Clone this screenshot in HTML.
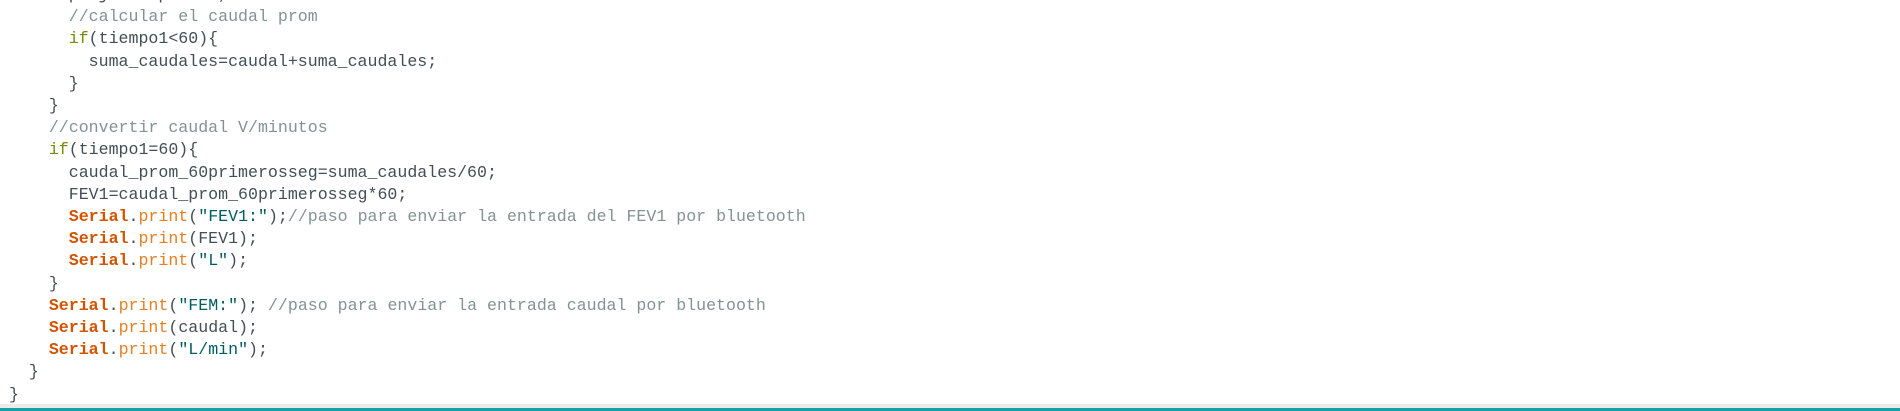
<!DOCTYPE html>
<html><head><meta charset="utf-8"><style>
html,body{margin:0;padding:0;width:1900px;height:411px;overflow:hidden;background:#fff;}
#code{position:absolute;left:9px;top:-16px;font-family:"Liberation Mono",monospace;font-size:16.6px;line-height:22.2px;color:#434f54;white-space:pre;}
.c{color:#849294}.k{color:#728e00}.s{color:#d35400;font-weight:bold}.p{color:#e67e22}.q{color:#005c5f}
#g{position:absolute;left:0;top:404px;width:1900px;height:4px;background:#ebebeb}
#t{position:absolute;left:0;top:408px;width:1900px;height:3px;background:#17a1a5}
</style></head><body>
<div id="code">      p  j     p     ,
      <span class="c">//calcular el caudal prom</span>
      <span class="k">if</span>(tiempo1&lt;60){
        suma_caudales=caudal+suma_caudales;
      }
    }
    <span class="c">//convertir caudal V/minutos</span>
    <span class="k">if</span>(tiempo1=60){
      caudal_prom_60primerosseg=suma_caudales/60;
      FEV1=caudal_prom_60primerosseg*60;
      <span class="s">Serial</span>.<span class="p">print</span>(<span class="q">"FEV1:"</span>);<span class="c">//paso para enviar la entrada del FEV1 por bluetooth</span>
      <span class="s">Serial</span>.<span class="p">print</span>(FEV1);
      <span class="s">Serial</span>.<span class="p">print</span>(<span class="q">"L"</span>);
    }
    <span class="s">Serial</span>.<span class="p">print</span>(<span class="q">"FEM:"</span>); <span class="c">//paso para enviar la entrada caudal por bluetooth</span>
    <span class="s">Serial</span>.<span class="p">print</span>(caudal);
    <span class="s">Serial</span>.<span class="p">print</span>(<span class="q">"L/min"</span>);
  }
}</div>
<div id="g"></div><div id="t"></div>
</body></html>
